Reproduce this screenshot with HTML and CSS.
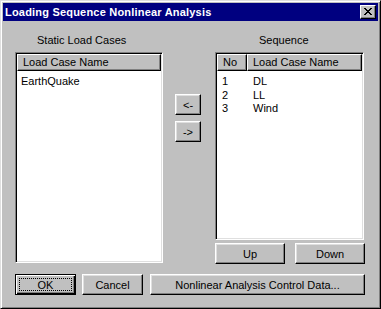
FILE: index.html
```html
<!DOCTYPE html>
<html>
<head>
<meta charset="utf-8">
<link rel="stylesheet" href="styles.css">
</head>
<body>
<div class="window">
  <div class="titlebar">
    <span class="title">Loading Sequence Nonlinear Analysis</span>
    <span class="close"><svg width="8" height="7" viewBox="0 0 8 7"><path d="M0 0h2v1h1v1h2v-1h1v-1h2v1h-1v1h-1v1h-1v1h1v1h1v1h1v1h-2v-1h-1v-1h-2v1h-1v1h-2v-1h1v-1h1v-1h1v-1h-1v-1h-1v-1h-1z" fill="#000"/></svg></span>
  </div>
  <div class="body">
    <div class="main">
      <div class="col col-left">
        <div class="label label-left">Static Load Cases</div>
        <div class="listbox list-left">
          <div class="header"><div class="hcell hfull">Load Case Name</div></div>
          <div class="rows">
            <div class="row"><span class="cell-name single">EarthQuake</span></div>
          </div>
        </div>
      </div>
      <div class="col col-mid">
        <button class="btn btn-arrow">&lt;-</button>
        <button class="btn btn-arrow">-&gt;</button>
      </div>
      <div class="col col-right">
        <div class="label label-right">Sequence</div>
        <div class="listbox list-right">
          <div class="header"><div class="hcell hno">No</div><div class="hcell hname">Load Case Name</div></div>
          <div class="rows">
            <div class="row"><span class="cell-no">1</span><span class="cell-name">DL</span></div>
            <div class="row"><span class="cell-no">2</span><span class="cell-name">LL</span></div>
            <div class="row"><span class="cell-no">3</span><span class="cell-name">Wind</span></div>
          </div>
        </div>
        <div class="updown">
          <button class="btn btn-ud">Up</button>
          <button class="btn btn-ud">Down</button>
        </div>
      </div>
    </div>
    <div class="bottom">
      <button class="btn btn-ok default"><span class="focus">OK</span></button>
      <button class="btn btn-cancel">Cancel</button>
      <button class="btn btn-wide">Nonlinear Analysis Control Data...</button>
    </div>
  </div>
</div>
</body>
</html>
```

FILE: styles.css
```css
html, body {
  margin: 0;
  padding: 0;
  background: #c0c0c0;
}
body {
  font-family: "Liberation Sans", Arial, sans-serif;
  font-size: 11px;
  color: #000;
}
.window {
  width: 381px;
  height: 309px;
  box-sizing: border-box;
  background: #c0c0c0;
  border: 1px solid;
  border-color: #dfdfdf #000 #000 #dfdfdf;
  box-shadow: inset 1px 1px #fff, inset -1px -1px #808080;
  padding: 2px;
  display: flex;
  flex-direction: column;
}
.titlebar {
  height: 18px;
  background: #000080;
  display: flex;
  align-items: center;
  justify-content: space-between;
  padding: 0 2px 0 2px;
}
.title {
  color: #fff;
  font-weight: bold;
  font-size: 11px;
  letter-spacing: 0.2px;
}
.close {
  width: 16px;
  height: 14px;
  box-sizing: border-box;
  background: #c0c0c0;
  border: 1px solid;
  border-color: #fff #000 #000 #fff;
  box-shadow: inset -1px -1px #808080;
  display: flex;
  align-items: center;
  justify-content: center;
  padding-bottom: 1px;
}
.close svg { display: block; }
.body {
  padding: 13px 0 0 12px;
  display: flex;
  flex-direction: column;
}
.main {
  display: flex;
}
.col {
  display: flex;
  flex-direction: column;
}
.col-left { width: 148px; }
.col-mid {
  width: 26px;
  margin-left: 12px;
  padding-top: 60px;
  gap: 6px;
}
.col-right {
  width: 150px;
  margin-left: 14px;
}
.label {
  height: 13px;
  line-height: 13px;
  margin-bottom: 5px;
}
.label-left { padding-left: 22px; }
.label-right { padding-left: 44px; }
.listbox {
  box-sizing: border-box;
  background: #fff;
  border: 1px solid;
  border-color: #808080 #fff #fff #808080;
  box-shadow: inset 1px 1px #000, inset -1px -1px #dfdfdf;
  padding: 1px;
  display: flex;
  flex-direction: column;
}
.list-left { height: 211px; }
.list-right { height: 188px; width: 149px; }
.header {
  display: flex;
  height: 17px;
}
.hcell {
  box-sizing: border-box;
  height: 17px;
  line-height: 15px;
  background: #c0c0c0;
  border: 1px solid;
  border-color: #fff #000 #000 #fff;
  box-shadow: inset -1px -1px #808080;
  padding-left: 5px;
}
.hfull { flex: 1; }
.hno { width: 30px; }
.hname { flex: 1; }
.rows {
  padding-top: 4px;
}
.row {
  height: 13.5px;
  line-height: 13px;
  display: flex;
}
.cell-no {
  width: 30px;
  box-sizing: border-box;
  padding-left: 5px;
}
.cell-name { padding-left: 6px; }
.cell-name.single { padding-left: 4px; }
.btn {
  font-family: "Liberation Sans", Arial, sans-serif;
  font-size: 11px;
  color: #000;
  background: #c0c0c0;
  box-sizing: border-box;
  border: 1px solid;
  border-color: #fff #000 #000 #fff;
  box-shadow: inset -1px -1px #808080, inset 1px 1px #dfdfdf;
  padding: 0;
  margin: 0;
  display: flex;
  align-items: center;
  justify-content: center;
}
.btn-arrow {
  width: 26px;
  height: 21px;
}
.updown {
  display: flex;
  gap: 10px;
  margin-top: 3px;
}
.btn-ud {
  width: 70px;
  height: 21px;
}
.bottom {
  display: flex;
  margin-top: 10px;
}
.btn-ok {
  width: 61px;
  height: 21px;
}
.btn.default {
  border: 1px solid #000;
  box-shadow: inset 1px 1px #fff, inset -1px -1px #000, inset -2px -2px #808080;
}
.focus {
  display: flex;
  align-items: center;
  justify-content: center;
  width: 53px;
  height: 13px;
  box-sizing: border-box;
  border: 1px dotted #000;
}
.btn-cancel {
  width: 61px;
  height: 21px;
  margin-left: 6px;
}
.btn-wide {
  width: 215px;
  height: 21px;
  margin-left: 7px;
}
```
